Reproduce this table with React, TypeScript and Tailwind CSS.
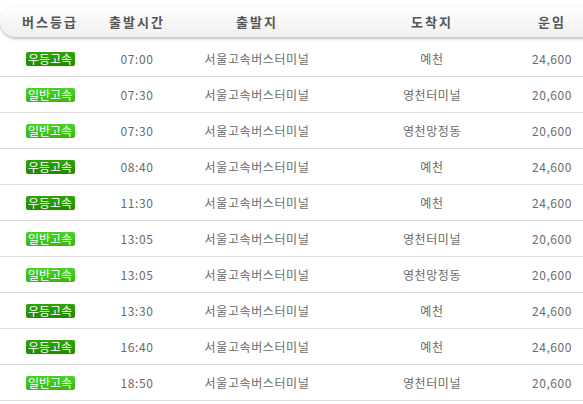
import React from "react";

type Row = { grade: "우등고속" | "일반고속"; time: string; from: string; to: string; fare: string };

const rows: Row[] = [
  { grade: "우등고속", time: "07:00", from: "서울고속버스터미널", to: "예천", fare: "24,600" },
  { grade: "일반고속", time: "07:30", from: "서울고속버스터미널", to: "영천터미널", fare: "20,600" },
  { grade: "일반고속", time: "07:30", from: "서울고속버스터미널", to: "영천망정동", fare: "20,600" },
  { grade: "우등고속", time: "08:40", from: "서울고속버스터미널", to: "예천", fare: "24,600" },
  { grade: "우등고속", time: "11:30", from: "서울고속버스터미널", to: "예천", fare: "24,600" },
  { grade: "일반고속", time: "13:05", from: "서울고속버스터미널", to: "영천터미널", fare: "20,600" },
  { grade: "일반고속", time: "13:05", from: "서울고속버스터미널", to: "영천망정동", fare: "20,600" },
  { grade: "우등고속", time: "13:30", from: "서울고속버스터미널", to: "예천", fare: "24,600" },
  { grade: "우등고속", time: "16:40", from: "서울고속버스터미널", to: "예천", fare: "24,600" },
  { grade: "일반고속", time: "18:50", from: "서울고속버스터미널", to: "영천터미널", fare: "20,600" },
];

const cols = "grid grid-cols-[100px_74px_166px_184px_56px] items-center";

const GradeBadge = ({ grade }: { grade: Row["grade"] }) => (
  <span
    className={
      grade === "우등고속"
        ? "inline-flex h-[14px] w-[49px] items-center justify-center rounded-[2px] bg-gradient-to-b from-[#2fa30a] to-[#1f8a00] text-[12px] leading-none text-white"
        : "inline-flex h-[14px] w-[49px] items-center justify-center rounded-[2px] bg-gradient-to-b from-[#4ad126] to-[#30bb10] text-[12px] leading-none text-white"
    }
  >
    {grade}
  </span>
);

export default function App() {
  return (
    <div className="h-[404px] w-[583px] overflow-hidden bg-white font-['Noto_Sans_CJK_KR',sans-serif]">
      {/* header bar */}
      <div
        className={`${cols} mt-[5px] mr-[-40px] h-[32px] rounded-l-[16px] border-t border-[#f4f4f4] bg-gradient-to-b from-white to-[#efefef] text-center text-[13px] font-bold tracking-[2px] text-[#555] shadow-[0_2px_3px_rgba(0,0,0,0.25)]`}
      >
        <div>버스등급</div>
        <div>출발시간</div>
        <div>출발지</div>
        <div>도착지</div>
        <div>운임</div>
      </div>

      {/* rows */}
      <div className="mt-[4px]">
        {rows.map((r, i) => (
          <div
            key={i}
            className={`${cols} h-[36px] border-b border-[#dcdcdc] text-center text-[12px] tracking-[0.6px] text-[#6a6a6a]`}
          >
            <div className="flex justify-center tracking-normal">
              <GradeBadge grade={r.grade} />
            </div>
            <div>{r.time}</div>
            <div>{r.from}</div>
            <div>{r.to}</div>
            <div>{r.fare}</div>
          </div>
        ))}
      </div>
    </div>
  );
}
